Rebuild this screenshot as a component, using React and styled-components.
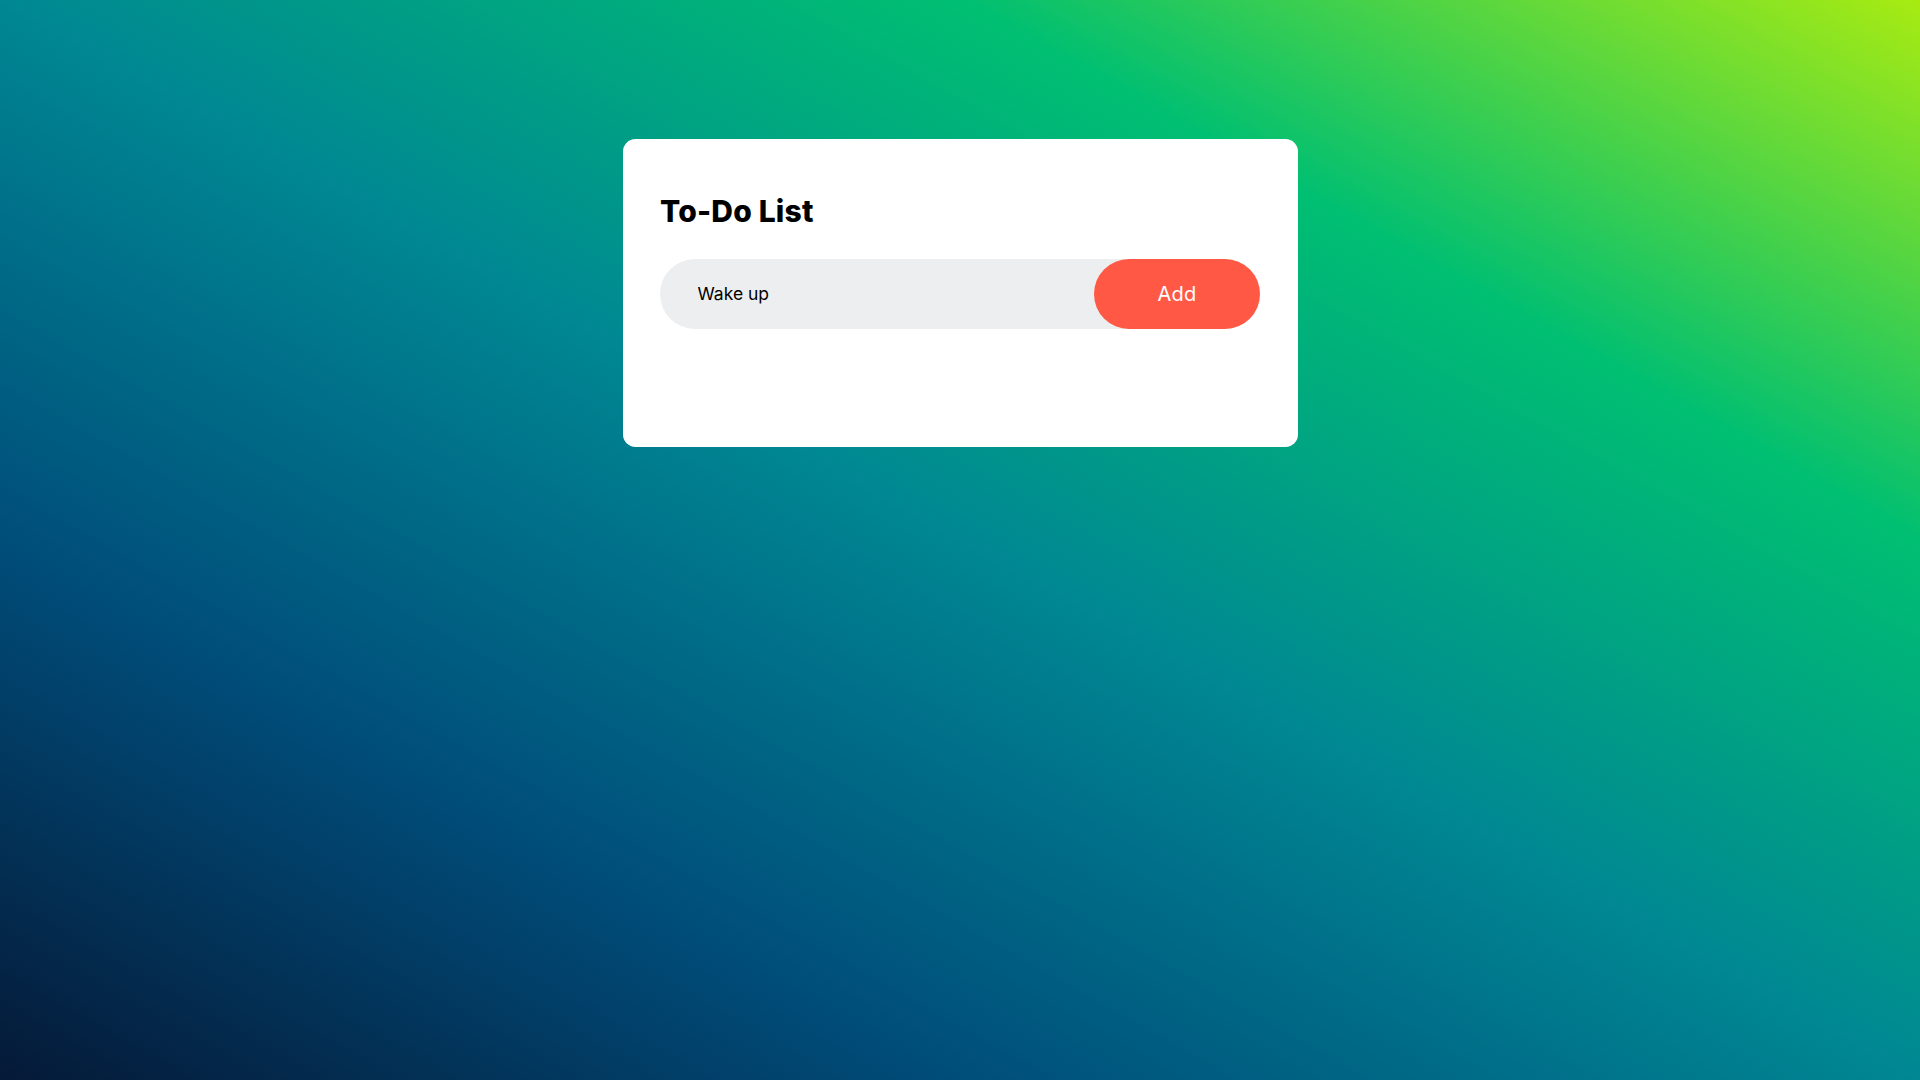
import React, { useState } from "react";
import styled, { createGlobalStyle } from "styled-components";

const GlobalStyle = createGlobalStyle`
  * { box-sizing: border-box; }
  html, body { margin: 0; padding: 0; }
  body { font-family: Inter, "Noto Sans", sans-serif; }
`;

const Page = styled.div`
  width: 100%;
  min-height: 100vh;
  padding: 12.5px;
  background: linear-gradient(to right top, #051937, #004d7a, #008793, #00bf72, #a8eb12);
`;

const Card = styled.div`
  width: 100%;
  max-width: 675px;
  margin: 126px auto 25px;
  padding: 50px 37.5px 87.5px;
  background: #ffffff;
  border-radius: 12.5px;
`;

const Title = styled.h2`
  margin: 0 0 25px;
  font-family: Inter, "Noto Sans", sans-serif;
  font-size: 30px;
  line-height: 45px;
  font-weight: 800;
  letter-spacing: 0.2px;
  color: #000000;
  display: flex;
  align-items: center;
`;

const Row = styled.div`
  display: flex;
  align-items: center;
  justify-content: space-between;
  background: #edeef0;
  border-radius: 37.5px;
  padding-left: 25px;
  margin-bottom: 31.25px;
`;

const Input = styled.input`
  flex: 1;
  min-width: 0;
  border: none;
  outline: none;
  background: transparent;
  padding: 12.5px;
  font-family: Inter, "Noto Sans", sans-serif;
  font-size: 17.5px;
  color: #000000;
`;

const AddButton = styled.button`
  border: none;
  outline: none;
  width: 166px;
  height: 70px;
  padding: 0;
  background: #ff5945;
  color: #ffffff;
  font-family: Inter, "Noto Sans", sans-serif;
  font-size: 20px;
  font-weight: 400;
  letter-spacing: 0.3px;
  border-radius: 50px;
  cursor: pointer;
`;

export default function App() {
  const [task, setTask] = useState("Wake up");
  return (
    <>
      <GlobalStyle />
      <Page>
        <Card>
          <Title>To-Do List</Title>
          <Row>
            <Input
              type="text"
              value={task}
              onChange={(e) => setTask(e.target.value)}
            />
            <AddButton>Add</AddButton>
          </Row>
        </Card>
      </Page>
    </>
  );
}
